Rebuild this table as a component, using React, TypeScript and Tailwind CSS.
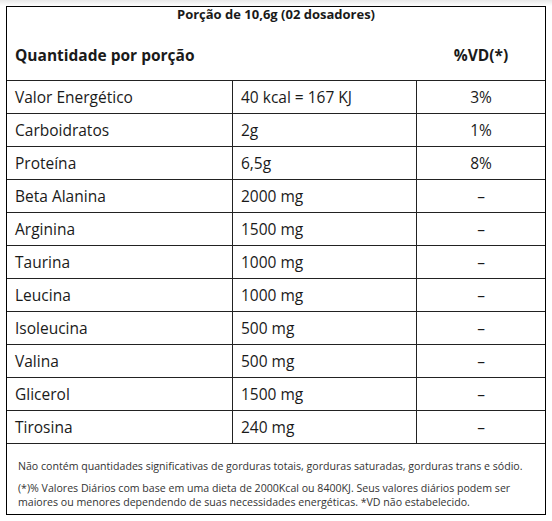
import React from "react";

const rows: [string, string, string][] = [
  ["Valor Energético", "40 kcal = 167 KJ", "3%"],
  ["Carboidratos", "2g", "1%"],
  ["Proteína", "6,5g", "8%"],
  ["Beta Alanina", "2000 mg", "–"],
  ["Arginina", "1500 mg", "–"],
  ["Taurina", "1000 mg", "–"],
  ["Leucina", "1000 mg", "–"],
  ["Isoleucina", "500 mg", "–"],
  ["Valina", "500 mg", "–"],
  ["Glicerol", "1500 mg", "–"],
  ["Tirosina", "240 mg", "–"],
];

export default function App() {
  return (
    <div
      className="w-[552px] h-[521px] bg-white text-[#1a1a1a]"
      style={{ fontFamily: '"Open Sans", "Noto Sans", sans-serif' }}
    >
      <div className="h-[6px] bg-gradient-to-b from-[#e9e9e9] to-white" />
      <div className="ml-[6px] w-[540px] border border-black">
        <div className="h-[74px] flex flex-col border-b border-[#222]">
          <div className="text-center text-[13px] font-bold leading-none pt-[1px]">
            Porção de 10,6g (02 dosadores)
          </div>
          <div className="flex items-center mt-[23px]">
            <div className="w-[410px] pl-[8px] text-[15.5px] font-bold">Quantidade por porção</div>
            <div className="flex-1 text-center text-[15.5px] font-bold">%VD(*)</div>
          </div>
        </div>
        {rows.map(([a, b, c], i) => (
          <div
            key={i}
            className="grid grid-cols-[226px_184px_1fr] h-[33px] border-b border-[#222] text-[15.5px]"
          >
            <div className="pl-[8px] pt-[2px] flex items-center border-r border-[#222]">{a}</div>
            <div className="pl-[8px] pt-[2px] flex items-center border-r border-[#222]">{b}</div>
            <div className="pt-[2px] flex items-center justify-center">{c}</div>
          </div>
        ))}
        <div className="h-[70px] pl-[11px] pt-[15px] text-[10.6px] text-[#333] leading-[14px]">
          <p>Não contém quantidades significativas de gorduras totais, gorduras saturadas, gorduras trans e sódio.</p>
          <p className="mt-[8px]">
            (*)% Valores Diários com base em uma dieta de 2000Kcal ou 8400KJ. Seus valores diários podem ser
            <br />
            maiores ou menores dependendo de suas necessidades energéticas. *VD não estabelecido.
          </p>
        </div>
      </div>
    </div>
  );
}
